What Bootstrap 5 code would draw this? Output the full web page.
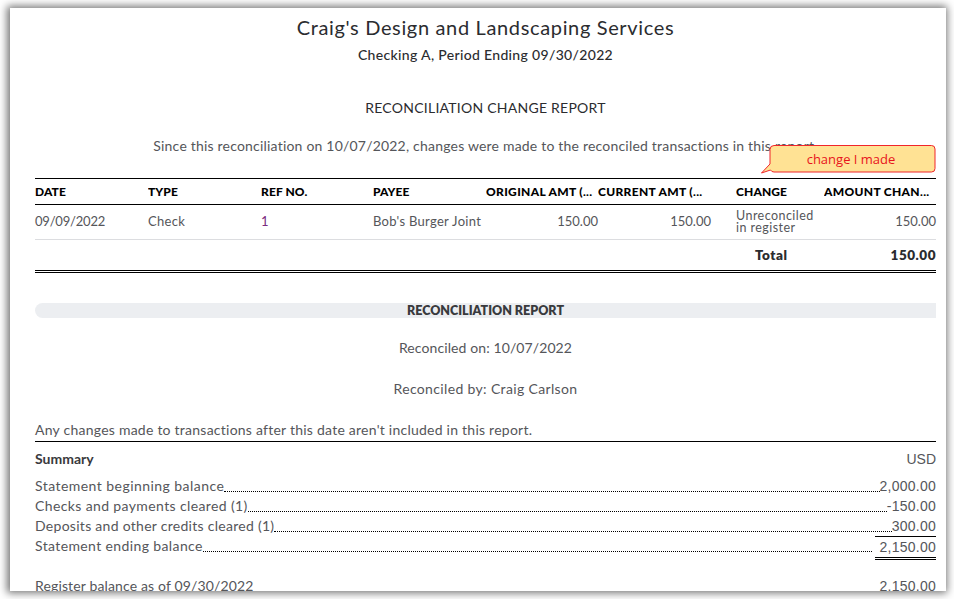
<!DOCTYPE html>
<html lang="en">
<head>
<meta charset="utf-8">
<title>Reconciliation Change Report</title>
<link href="https://cdn.jsdelivr.net/npm/bootstrap@5.3.0/dist/css/bootstrap.min.css" rel="stylesheet">
<style>
html,body{height:100%;overflow:hidden;background:#fff}
body{font-family:"Lato","Liberation Sans",sans-serif;color:#55565a;font-size:14px;padding:8px 8px 8px 10px}
.sheet{position:relative;width:936px;height:583px;background:#fff;overflow:hidden;padding:0 10px 0 25px;box-shadow:-1px 0 8px 2px rgba(0,0,0,.55)}
.ttl{font-size:20px;line-height:24px;padding-top:7px;letter-spacing:.65px;color:#2b2c2f}
.sub{font-size:14px;line-height:20px;margin-top:6px;font-weight:500;color:#2b2c2f;letter-spacing:.33px}
.rpt{font-size:14px;line-height:20px;margin-top:33px;color:#2b2c2f;letter-spacing:.25px}
.since{font-size:14px;line-height:20px;margin-top:18px;letter-spacing:.2px}
.tbl{table-layout:fixed;width:901px;margin:22px 0 0;border-collapse:collapse;font-size:13px}
.tbl th{font-size:12px;font-weight:900;color:#000;height:26px;padding:0;border-top:1px solid #000;border-bottom:1px solid #000;white-space:nowrap;overflow:hidden;letter-spacing:.1px;vertical-align:middle}
.tbl th.wide{letter-spacing:.32px}
.tbl td{padding:0;vertical-align:middle;letter-spacing:.3px;color:#55565a}
.drow td{height:35px;border-bottom:1px solid #dcdde0}
.trow td{height:32px;border-bottom:3px double #000;font-weight:800;color:#2b2c2f}
.trow .tot{font-size:13.5px;letter-spacing:.5px}
.tbl td.num{letter-spacing:0}
.tbl td.dt{letter-spacing:-.2px}
.tbl td.ref{color:#7a2a80}
.tbl td.two{font-size:12.5px;line-height:12px;letter-spacing:.45px}
.totlab{padding-left:19px!important}
.bar{margin-top:30px;height:15px;line-height:15px;background:#eceef1;border-radius:8px 0 0 8px;font-size:12.5px;font-weight:800;color:#393a3d}
.ctr{line-height:20px}
.c1{margin-top:20px;letter-spacing:.1px}.c2{margin-top:21px;letter-spacing:.35px}
.note{margin-top:21px;height:22px;line-height:19px;border-bottom:1px solid #000;letter-spacing:.24px}
.sumh{margin-top:7px;line-height:20px;font-weight:700;color:#393a3d}
.usd{font-family:"Liberation Sans",sans-serif;font-weight:400;color:#55565a}
.rowsum{line-height:20px;letter-spacing:.38px}
.rowsum .amt{font-family:"Liberation Sans",sans-serif;letter-spacing:.25px}
.rowsum .begb{letter-spacing:.45px}
.rowsum .depb{letter-spacing:.28px}
.rowsum .regb{letter-spacing:.14px}
.sgap{margin-top:7px}
.dots{flex:1;border-bottom:1px dotted #000;margin-bottom:4px}
.endb{width:61px;margin-left:3px;text-align:right;border-top:1px solid #000;border-bottom:3px double #000;line-height:20px;height:24px;margin-bottom:-4px}
.lastb{margin-top:20px}
.callout{position:absolute;left:750px;top:136px;width:177px;height:32px}
.callout text{font-family:"Open Sans","Liberation Sans",sans-serif;font-size:13px;fill:#e8141c}
</style>
</head>
<body>
<div class="sheet">
  <div class="text-center ttl">Craig's Design and Landscaping Services</div>
  <div class="text-center sub">Checking A, Period Ending 09/30/2022</div>
  <div class="text-center rpt">RECONCILIATION CHANGE REPORT</div>
  <div class="text-center since">Since this reconciliation on 10/07/2022, changes were made to the reconciled transactions in this report.</div>
  <table class="tbl">
    <colgroup><col style="width:113px"><col style="width:113px"><col style="width:112px"><col style="width:113px"><col style="width:112px"><col style="width:113px"><col style="width:25px"><col style="width:88px"><col style="width:112px"></colgroup>
    <thead><tr><th>DATE</th><th>TYPE</th><th>REF NO.</th><th>PAYEE</th><th class="wide">ORIGINAL AMT (...</th><th class="wide">CURRENT AMT (...</th><th></th><th>CHANGE</th><th class="wide">AMOUNT CHAN...</th></tr></thead>
    <tbody>
      <tr class="drow"><td class="dt">09/09/2022</td><td>Check</td><td class="ref">1</td><td>Bob's Burger Joint</td><td class="text-end num">150.00</td><td class="text-end num">150.00</td><td></td><td class="two">Unreconciled<br>in register</td><td class="text-end num">150.00</td></tr>
      <tr class="trow"><td colspan="6"></td><td></td><td class="tot totlab">Total</td><td class="text-end tot">150.00</td></tr>
    </tbody>
  </table>
  <div class="bar text-center">RECONCILIATION REPORT</div>
  <div class="text-center ctr c1">Reconciled on: 10/07/2022</div>
  <div class="text-center ctr c2">Reconciled by: Craig Carlson</div>
  <div class="note">Any changes made to transactions after this date aren't included in this report.</div>
  <div class="d-flex justify-content-between sumh"><span>Summary</span><span class="usd">USD</span></div>
  <div class="sgap">
    <div class="d-flex rowsum"><span class="begb">Statement beginning balance</span><span class="dots"></span><span class="amt">2,000.00</span></div>
    <div class="d-flex rowsum"><span>Checks and payments cleared (1)</span><span class="dots"></span><span class="amt">-150.00</span></div>
    <div class="d-flex rowsum"><span class="depb">Deposits and other credits cleared (1)</span><span class="dots"></span><span class="amt">300.00</span></div>
    <div class="d-flex rowsum"><span>Statement ending balance</span><span class="dots"></span><span class="amt endb">2,150.00</span></div>
    <div class="d-flex rowsum lastb justify-content-between"><span class="regb">Register balance as of 09/30/2022</span><span class="amt">2,150.00</span></div>
  </div>
  <div class="callout">
    <svg width="177" height="32" viewBox="0 0 177 32" aria-label="change I made">
      <path d="M14 1.500H171.500a3.500 3.500 0 0 1 3.500 3.500V24.500a3.500 3.500 0 0 1-3.500 3.500H14a4 4 0 0 1-3.500-2L1.500 29 10 20V5.500A4 4 0 0 1 14 1.500Z" fill="#ffe294" stroke="#f0252b" stroke-width="1"/>
      <text x="91" y="20" text-anchor="middle">change I made</text>
    </svg>
  </div>
</div>
<script src="https://cdn.jsdelivr.net/npm/bootstrap@5.3.0/dist/js/bootstrap.bundle.min.js"></script>
</body>
</html>
